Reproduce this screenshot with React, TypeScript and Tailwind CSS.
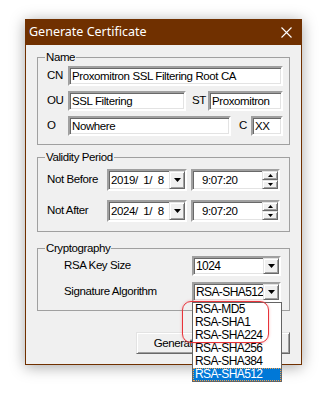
import React from 'react'

const sunken =
  'border-2 border-t-[#a0a0a0] border-l-[#a0a0a0] border-r-white border-b-white bg-white shadow-[inset_1px_1px_0_#696969,inset_-1px_-1px_0_#e3e3e3]'
const raised =
  'bg-[#f0f0f0] border border-t-[#e3e3e3] border-l-[#e3e3e3] border-r-[#696969] border-b-[#696969] shadow-[inset_1px_1px_0_#fff,inset_-1px_-1px_0_#a0a0a0]'

const Down = () => (
  <svg width="7" height="4" viewBox="0 0 7 4">
    <path d="M0 0h7L3.5 4z" fill="#000" />
  </svg>
)

const Tiny = ({ up }: { up?: boolean }) => (
  <svg width="5" height="3" viewBox="0 0 5 3">
    <path d={up ? 'M2.5 0L5 3H0z' : 'M0 0h5L2.5 3z'} fill="#000" />
  </svg>
)

const Group = ({ title, className, children }: { title: string; className?: string; children: React.ReactNode }) => (
  <fieldset className={`border border-[#a0a0a0] ${className ?? ''}`}>
    <legend className="ml-[7px] px-[1px] leading-[14px]">{title}</legend>
    {children}
  </fieldset>
)

const Edit = ({ value, className }: { value: string; className?: string }) => (
  <div className={`${sunken} h-[20px] pl-[2px] leading-[16px] whitespace-nowrap overflow-hidden ${className ?? ''}`}>{value}</div>
)

const Combo = ({ value }: { value: string }) => (
  <div className={`${sunken} h-[20px] w-[89px] flex items-stretch`}>
    <span className="flex-1 min-w-0 pl-[2px] leading-[16px] text-[12px] tracking-[-0.6px] whitespace-nowrap overflow-hidden">{value}</span>
    <div className={`${raised} w-[16px] shrink-0 flex items-center justify-center`}>
      <Down />
    </div>
  </div>
)

const DateRow = ({ label, date }: { label: string; date: string }) => (
  <div className="flex items-center h-[22px]">
    <span className="w-[60px]">{label}</span>
    <div className={`${sunken} h-[22px] w-[80px] flex items-stretch`}>
      <span className="flex-1 pl-[2px] leading-[18px] whitespace-pre">{date}</span>
      <div className={`${raised} w-[16px] flex items-center justify-center`}>
        <Down />
      </div>
    </div>
    <div className={`${sunken} ml-[4px] h-[22px] w-[89px] flex items-stretch`}>
      <span className="flex-1 pl-[9px] leading-[18px]">9:07:20</span>
      <div className="w-[16px] flex flex-col">
        <div className={`${raised} h-[9px] flex items-center justify-center`}>
          <Tiny up />
        </div>
        <div className={`${raised} h-[9px] flex items-center justify-center`}>
          <Tiny />
        </div>
      </div>
    </div>
  </div>
)

const algos = ['RSA-MD5', 'RSA-SHA1', 'RSA-SHA224', 'RSA-SHA256', 'RSA-SHA384', 'RSA-SHA512']

export default function App() {
  return (
    <div className="w-[327px] h-[395px] bg-white pt-[19px] pl-[25px] font-['Liberation_Sans',Arial,sans-serif] text-[11.5px] tracking-[-0.4px] text-black">
      <div className="w-[277px] h-[346px] flex flex-col shadow-[0_2px_14px_rgba(0,0,0,0.35)]">
        {/* title bar */}
        <div className="h-[26px] bg-[#703000] text-white flex items-center justify-between pl-[4px] pr-[10px]">
          <span className="font-['Noto_Sans',sans-serif] text-[12.5px] tracking-normal">Generate Certificate</span>
          <svg width="11" height="11" viewBox="0 0 11 11">
            <path d="M0.5 0.5l10 10M10.5 0.5l-10 10" stroke="#fff" strokeWidth="1.1" />
          </svg>
        </div>

        <div className="flex-1 bg-[#f0f0f0] border-x border-b border-[#703000] px-[11px] flex flex-col">
          <Group title="Name" className="mt-[5px]">
            <div className="pt-[2px] pb-[8px] pl-[9px] pr-[6px] flex flex-col gap-[5px]">
              <div className="flex items-center">
                <span className="w-[21px]">CN</span>
                <Edit value="Proxomitron SSL Filtering Root CA" className="flex-1" />
              </div>
              <div className="flex items-center">
                <span className="w-[21px]">OU</span>
                <Edit value="SSL Filtering" className="w-[118px]" />
                <span className="ml-[6px] w-[16px]">ST</span>
                <Edit value="Proxomitron" className="flex-1" />
              </div>
              <div className="flex items-center">
                <span className="w-[21px]">O</span>
                <Edit value="Nowhere" className="w-[163px]" />
                <span className="ml-[8px] w-[12px]">C</span>
                <Edit value="XX" className="flex-1" />
              </div>
            </div>
          </Group>

          <Group title="Validity Period" className="mt-[5px]">
            <div className="pt-[5px] pb-[9px] pl-[9px] pr-[8px] flex flex-col gap-[9px]">
              <DateRow label="Not Before" date="2019/  1/  8" />
              <DateRow label="Not After" date="2024/  1/  8" />
            </div>
          </Group>

          <Group title="Cryptography" className="mt-[9px]">
            <div className="pt-[1px] pb-[8px] pl-[26px] pr-[8px] flex flex-col gap-[6px]">
              <div className="flex items-center">
                <span className="flex-1">RSA Key Size</span>
                <Combo value="1024" />
              </div>
              <div className="flex items-center">
                <span className="flex-1">Signature Algorithm</span>
                <div className="relative">
                  <Combo value="RSA-SHA512" />
                  <div className="absolute z-10 left-0 top-full w-[90px] border border-[#646464] bg-white">
                    {algos.map((a) => (
                      <div
                        key={a}
                        className={`h-[13px] leading-[13px] pl-[2px] text-[12px] tracking-[-0.6px] whitespace-nowrap ${
                          a === 'RSA-SHA512' ? 'bg-[#0078d7] text-white outline outline-1 outline-dotted outline-[#f3a24a] -outline-offset-1' : ''
                        }`}
                      >
                        {a}
                      </div>
                    ))}
                  </div>
                  <div className="absolute z-20 left-[-10px] top-[19px] w-[87px] h-[42px] rounded-[9px] border-[1.5px] border-[#e8333a] shadow-[0_0_3px_rgba(232,51,58,0.35)]" />
                </div>
              </div>
            </div>
          </Group>

          <div className="mt-[21px] flex justify-end gap-[6px]">
            <button className={`${raised} w-[80px] h-[22px] leading-[18px]`}>Generate</button>
            <button className={`${raised} w-[68px] h-[22px]`} />
          </div>
        </div>
      </div>
    </div>
  )
}
